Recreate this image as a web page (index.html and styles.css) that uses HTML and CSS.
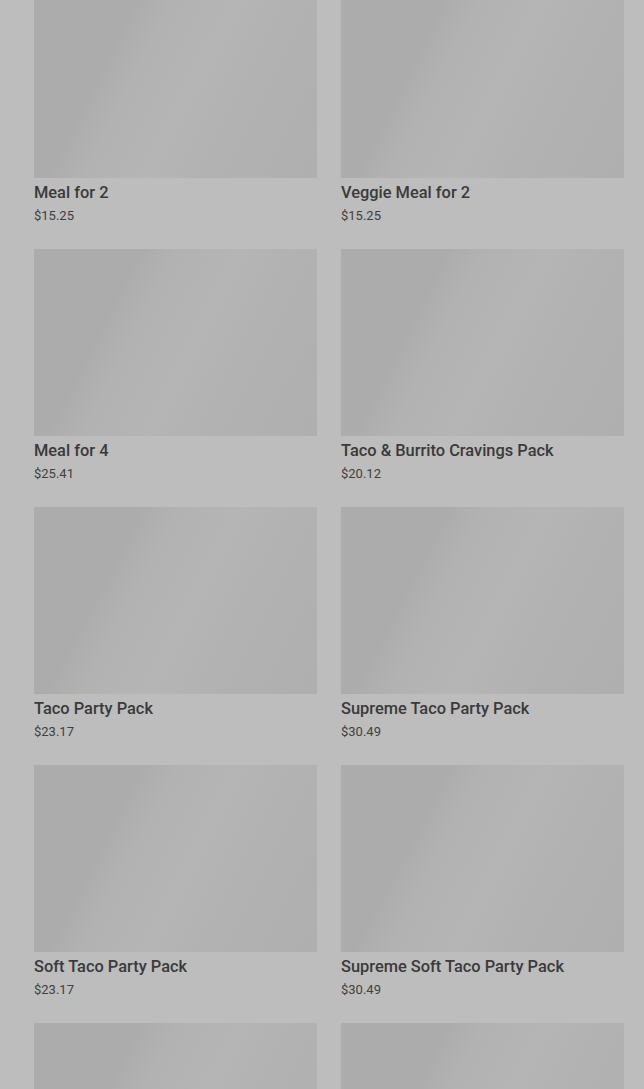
FILE: index.html
```html
<!DOCTYPE html>
<html lang="en">
<head>
    <meta charset="UTF-8">
    <meta name="viewport" content="width=device-width, initial-scale=1.0">
    <title>Packs</title>
    <link rel="stylesheet" href="styles.css">
</head>
<body>
    <div class="grid">
        <div class="card">
            <div class="thumb"></div>
            <div class="name">Meal for 2</div>
            <div class="price">$15.25</div>
        </div>
        <div class="card">
            <div class="thumb"></div>
            <div class="name">Veggie Meal for 2</div>
            <div class="price">$15.25</div>
        </div>
        <div class="card">
            <div class="thumb"></div>
            <div class="name">Meal for 4</div>
            <div class="price">$25.41</div>
        </div>
        <div class="card">
            <div class="thumb"></div>
            <div class="name">Taco &amp; Burrito Cravings Pack</div>
            <div class="price">$20.12</div>
        </div>
        <div class="card">
            <div class="thumb"></div>
            <div class="name">Taco Party Pack</div>
            <div class="price">$23.17</div>
        </div>
        <div class="card">
            <div class="thumb"></div>
            <div class="name">Supreme Taco Party Pack</div>
            <div class="price">$30.49</div>
        </div>
        <div class="card">
            <div class="thumb"></div>
            <div class="name">Soft Taco Party Pack</div>
            <div class="price">$23.17</div>
        </div>
        <div class="card">
            <div class="thumb"></div>
            <div class="name">Supreme Soft Taco Party Pack</div>
            <div class="price">$30.49</div>
        </div>
        <!-- next row, only the top of the pictures is in view -->
        <div class="card">
            <div class="thumb"></div>
        </div>
        <div class="card">
            <div class="thumb"></div>
        </div>
    </div>
</body>
</html>
```

FILE: styles.css
```css
html, body {
    margin: 0;
    height: 100%;
    overflow: hidden;
}
body {
    font-family: Roboto, "Liberation Sans", sans-serif;
    background: #bdbdbd;
}
.grid {
    display: grid;
    grid-template-columns: 283px 283px;
    column-gap: 24px;
    padding: 0 20px 0 34px;
    margin-top: -9.5px;
}
.card {
    padding-bottom: 23.5px;
}
.thumb {
    height: 187.5px;
    background: linear-gradient(117deg, #acacac 0%, #acacac 28%, #b2b2b2 38%, #b5b5b5 55%, #b2b2b2 70%, #afafaf 100%);
}
.name {
    margin-top: 5px;
    font-size: 16.4px;
    font-weight: 500;
    line-height: 20px;
    color: #3a3a3a;
}
.price {
    margin-top: 4px;
    font-size: 13px;
    line-height: 18px;
    color: #404040;
}
```
